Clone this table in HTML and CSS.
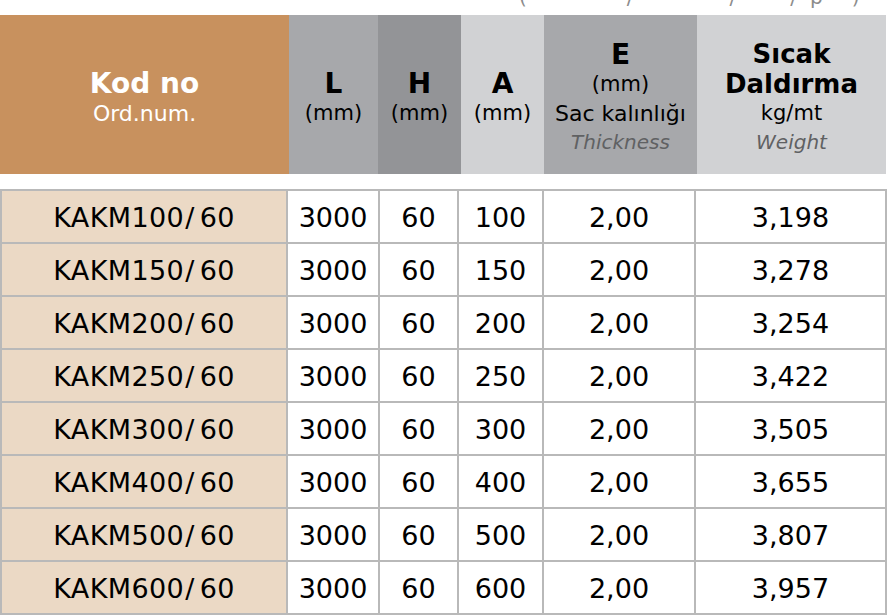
FILE: index.html
```html
<!DOCTYPE html>
<html lang="tr">
<head>
<meta charset="utf-8">
<title>KAKM</title>
<link rel="stylesheet" href="styles.css">
</head>
<body>
<div class="page">
  <div class="note">
    <div class="note-line"><span class="n1">(</span><span class="n2">/</span><span class="n3">/</span><span class="n4">/</span><span class="n5">p</span><span class="n6">)</span></div>
  </div>
  <div class="head">
    <div class="hc kod"><div class="big white">Kod no</div><div class="sub white">Ord.num.</div></div>
    <div class="hc c-l"><div class="big">L</div><div class="sub">(mm)</div></div>
    <div class="hc c-h"><div class="big">H</div><div class="sub">(mm)</div></div>
    <div class="hc c-a"><div class="big">A</div><div class="sub">(mm)</div></div>
    <div class="hc c-e"><div class="big">E</div><div class="sub">(mm)</div><div class="sub">Sac kalınlığı</div><div class="sub it">Thickness</div></div>
    <div class="hc c-w"><div class="mid">Sıcak</div><div class="mid">Daldırma</div><div class="sub">kg/mt</div><div class="sub it">Weight</div></div>
  </div>
  <div class="data">
    <div class="cell code">KAKM100<span class="sl">/</span>60</div><div class="cell">3000</div><div class="cell">60</div><div class="cell">100</div><div class="cell">2,00</div><div class="cell">3,198</div>
    <div class="cell code">KAKM150<span class="sl">/</span>60</div><div class="cell">3000</div><div class="cell">60</div><div class="cell">150</div><div class="cell">2,00</div><div class="cell">3,278</div>
    <div class="cell code">KAKM200<span class="sl">/</span>60</div><div class="cell">3000</div><div class="cell">60</div><div class="cell">200</div><div class="cell">2,00</div><div class="cell">3,254</div>
    <div class="cell code">KAKM250<span class="sl">/</span>60</div><div class="cell">3000</div><div class="cell">60</div><div class="cell">250</div><div class="cell">2,00</div><div class="cell">3,422</div>
    <div class="cell code">KAKM300<span class="sl">/</span>60</div><div class="cell">3000</div><div class="cell">60</div><div class="cell">300</div><div class="cell">2,00</div><div class="cell">3,505</div>
    <div class="cell code">KAKM400<span class="sl">/</span>60</div><div class="cell">3000</div><div class="cell">60</div><div class="cell">400</div><div class="cell">2,00</div><div class="cell">3,655</div>
    <div class="cell code">KAKM500<span class="sl">/</span>60</div><div class="cell">3000</div><div class="cell">60</div><div class="cell">500</div><div class="cell">2,00</div><div class="cell">3,807</div>
    <div class="cell code">KAKM600<span class="sl">/</span>60</div><div class="cell">3000</div><div class="cell">60</div><div class="cell">600</div><div class="cell">2,00</div><div class="cell">3,957</div>
  </div>
</div>
</body>
</html>
```
FILE: styles.css
```css
html, body {
  margin: 0;
  padding: 0;
  background: #ffffff;
}
body {
  font-family: "DejaVu Sans", "Liberation Sans", sans-serif;
  color: #000;
}
.page {
  width: 888px;
  height: 615px;
  overflow: hidden;
}
.note {
  height: 15px;
  overflow: hidden;
}
.note-line {
  margin-top: -13px;
  font-size: 20px;
  line-height: 20px;
  color: #8c8c8c;
  white-space: nowrap;
  display: flex;
}
.n1 { margin-left: 519px; }
.n2 { margin-left: 100px; }
.n3 { margin-left: 96px; }
.n4 { margin-left: 54px; }
.n5 { margin-left: 13px; }
.n6 { margin-left: 29px; }

.head {
  display: grid;
  grid-template-columns: 289px 89px 83px 83px 153px 189px;
  height: 159px;
}
.hc {
  display: flex;
  flex-direction: column;
  justify-content: center;
  align-items: center;
  padding-top: 7px;
  box-sizing: border-box;
  text-align: center;
  white-space: nowrap;
}
.kod { background: #c8915e; }
.c-l { background: #a7a8ab; }
.c-h { background: #939497; }
.c-a { background: #d1d2d4; }
.c-e { background: #a7a8ab; }
.c-w { background: #d1d2d4; }
.big {
  font-weight: bold;
  font-size: 28px;
  line-height: 30px;
}
.mid {
  font-weight: bold;
  font-size: 26px;
  line-height: 30px;
}
.sub {
  font-size: 21px;
  line-height: 29px;
}
.kod .big { font-size: 28px; }
.kod .sub { font-size: 22px; }
.c-e .sub:nth-child(3) { font-size: 22px; }
.white { color: #ffffff; }
.it {
  font-style: italic;
  color: #606163;
  font-size: 20px;
}

.data {
  margin-top: 15px;
  width: 887px;
  box-sizing: border-box;
  display: grid;
  grid-template-columns: 284px 90px 77px 83px 150px 189px;
  grid-auto-rows: 51px;
  gap: 2px;
  padding: 2px;
  background: #b9b9b9;
}
.cell {
  background: #ffffff;
  display: flex;
  align-items: center;
  justify-content: center;
  font-size: 27px;
  padding-top: 2px;
  box-sizing: border-box;
  white-space: nowrap;
}
.cell.code {
  background: #ebd9c5;
  letter-spacing: 0.4px;
}
.sl {
  margin: 0 5px 0 1px;
}
```
